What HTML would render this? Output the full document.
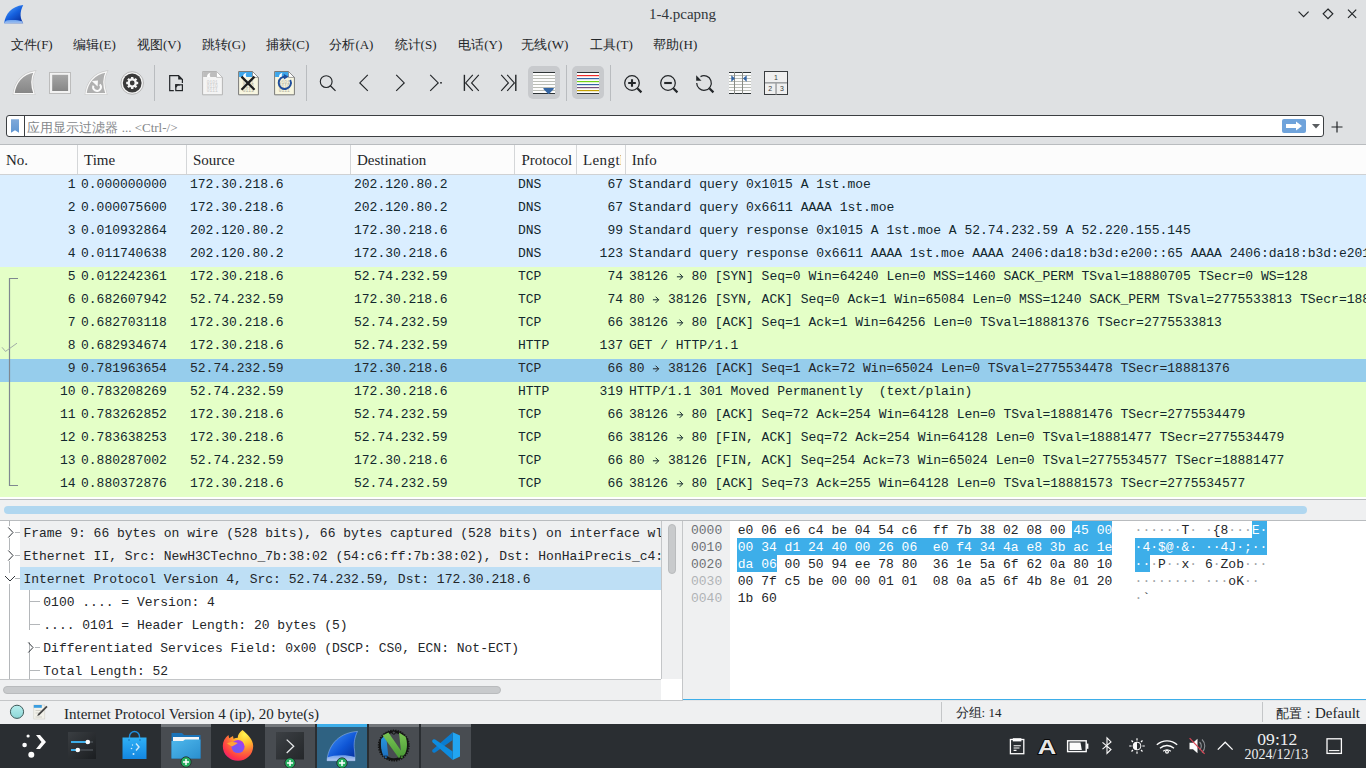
<!DOCTYPE html><html><head><meta charset="utf-8"><style>
*{margin:0;padding:0;box-sizing:border-box}
html,body{width:1366px;height:768px;overflow:hidden;background:#dfe1e3;font-family:"Liberation Serif", serif;color:#232629}
.a{position:absolute}
.t{position:absolute;white-space:pre;line-height:1}
.m{font-family:"Liberation Mono", monospace;font-size:13px}
svg{position:absolute;overflow:visible}
</style></head><body>
<svg style="left:0;top:0" width="30" height="30" viewBox="0 0 30 30">
<defs><linearGradient id="fin" x1="0.2" y1="0.1" x2="0.8" y2="0.9"><stop offset="0" stop-color="#4a98f8"/><stop offset="0.5" stop-color="#1560de"/><stop offset="1" stop-color="#0a36a6"/></linearGradient>
<linearGradient id="finw" x1="0" y1="0" x2="0" y2="1"><stop offset="0" stop-color="#6da2ee"/><stop offset="1" stop-color="#9fbfee"/></linearGradient></defs>
<path d="M4.2 23.2 C5.5 14 11 6.5 23.2 5 C21.4 8.5 20.4 12 20.6 15.5 C20.8 18.5 22 21 23.2 23.2 Z" fill="url(#fin)"/>
<path d="M4.2 23.2 C5 21.5 6 20.6 7.5 20.3 C12 19.6 18 19.8 22 21.2 L23.2 23.2 Z" fill="url(#finw)"/>
</svg>
<div class="t" style="left:649px;top:7px;font-size:15px;color:#31363b">1-4.pcapng</div>
<svg style="left:1297px;top:8px" width="64" height="14" viewBox="0 0 64 14">
<path d="M1.6 3.7 L6.6 8.7 L11.6 3.7" fill="none" stroke="#232629" stroke-width="1.2"/>
<path d="M31 1 L35.8 5.8 L31 10.6 L26.2 5.8 Z" fill="none" stroke="#232629" stroke-width="1.2"/>
<path d="M51 1.7 L59.2 9.9 M59.2 1.7 L51 9.9" fill="none" stroke="#232629" stroke-width="1.2"/>
</svg>
<div class="t" style="left:10.8px;top:38px;font-size:13px;color:#232629">文件(F)</div>
<div class="t" style="left:73.2px;top:38px;font-size:13px;color:#232629">编辑(E)</div>
<div class="t" style="left:137px;top:38px;font-size:13px;color:#232629">视图(V)</div>
<div class="t" style="left:201.5px;top:38px;font-size:13px;color:#232629">跳转(G)</div>
<div class="t" style="left:265.9px;top:38px;font-size:13px;color:#232629">捕获(C)</div>
<div class="t" style="left:329.4px;top:38px;font-size:13px;color:#232629">分析(A)</div>
<div class="t" style="left:394.6px;top:38px;font-size:13px;color:#232629">统计(S)</div>
<div class="t" style="left:458.2px;top:38px;font-size:13px;color:#232629">电话(Y)</div>
<div class="t" style="left:521.4px;top:38px;font-size:13px;color:#232629">无线(W)</div>
<div class="t" style="left:590.2px;top:38px;font-size:13px;color:#232629">工具(T)</div>
<div class="t" style="left:653.2px;top:38px;font-size:13px;color:#232629">帮助(H)</div>
<div id="toolbar"></div>
<div class="a" style="left:154.0px;top:65px;width:1px;height:36px;background:#b9bcbf"></div><div class="a" style="left:306.0px;top:65px;width:1px;height:36px;background:#b9bcbf"></div><div class="a" style="left:566.0px;top:65px;width:1px;height:36px;background:#b9bcbf"></div><div class="a" style="left:610.0px;top:65px;width:1px;height:36px;background:#b9bcbf"></div><div class="a" style="left:527.6px;top:66.4px;width:32.8px;height:32.8px;border-radius:5px;background:#c8cacd"></div><div class="a" style="left:571.5px;top:66.4px;width:32.8px;height:32.8px;border-radius:5px;background:#c8cacd"></div><svg style="left:12px;top:70px" width="25" height="26" viewBox="0 0 25 26">
<defs><linearGradient id="gfin" x1="0" y1="0" x2="0" y2="1"><stop offset="0" stop-color="#a8a8a8"/><stop offset="1" stop-color="#858585"/></linearGradient></defs>
<path d="M2 23.6 C3.3 13 10.3 3.5 22.4 1.8 C19.6 7 19 15 22 23.6 Z" fill="#f6f6f6" stroke="#c8c8c8" stroke-width="2.4"/>
<path d="M2 23.6 C3.3 13 10.3 3.5 22.4 1.8 C19.6 7 19 15 22 23.6 Z" fill="url(#gfin)" stroke="#f8f8f8" stroke-width="1.3"/>
</svg><svg style="left:48px;top:71px" width="24" height="24" viewBox="0 0 24 24">
<defs><linearGradient id="gsq" x1="0" y1="0" x2="0" y2="1"><stop offset="0" stop-color="#a6a6a6"/><stop offset="1" stop-color="#868686"/></linearGradient></defs>
<rect x="1.5" y="1.5" width="21" height="21" fill="#f2f2f2" stroke="#bcbcbc" stroke-width="1"/>
<rect x="4.2" y="3.8" width="15.9" height="16.2" fill="url(#gsq)"/>
</svg><svg style="left:84px;top:70px" width="25" height="26" viewBox="0 0 25 26">
<path d="M2 23.6 C3.3 13 10.3 3.5 22.4 1.8 C19.6 7 19 15 22 23.6 Z" fill="#f6f6f6" stroke="#c8c8c8" stroke-width="2.4"/>
<path d="M2 23.6 C3.3 13 10.3 3.5 22.4 1.8 C19.6 7 19 15 22 23.6 Z" fill="#b0b0b0" stroke="#f8f8f8" stroke-width="1.3"/>
<path d="M15.8 14.3 A3.9 3.9 0 1 1 9.4 15.6" fill="none" stroke="#fafafa" stroke-width="1.9"/>
<path d="M7.8 11.1 L14 10.5 L13.6 16.6 Z" fill="#fafafa"/>
</svg><svg style="left:120px;top:71px" width="25" height="25" viewBox="0 0 25 25">
<circle cx="12.2" cy="12" r="11.3" fill="#f4f4f4" stroke="#a8a8a8" stroke-width="0.8"/>
<circle cx="12.2" cy="12" r="9.4" fill="#3a3a3a"/>
<g fill="#f4f4f4" transform="translate(0 -0.2)"><circle cx="12.2" cy="12.2" r="4.7"/><rect x="11" y="6.2" width="2.4" height="12" transform="rotate(0 12.2 12.2)"/><rect x="11" y="6.2" width="2.4" height="12" transform="rotate(45 12.2 12.2)"/><rect x="11" y="6.2" width="2.4" height="12" transform="rotate(90 12.2 12.2)"/><rect x="11" y="6.2" width="2.4" height="12" transform="rotate(135 12.2 12.2)"/></g>
<circle cx="12.2" cy="12" r="2.4" fill="#3a3a3a"/>
</svg><svg style="left:164px;top:70px" width="26" height="26" viewBox="0 0 26 26">
<g fill="none" stroke="#232629" stroke-width="1.2">
<path d="M9.8 20.6 H5.7 V5.7 H14.6 L18.4 9.5 V12.9"/>
<rect x="11.8" y="14.8" width="6.6" height="5.8"/>
</g>
<path d="M14.2 5.4 V9.5 H18.4 Z" fill="#232629"/>
<path d="M11.3 14.2 H15 L16.2 15.4 H11.3 Z" fill="#232629"/>
<path d="M11.3 15.2 H14.2 L12.3 17.5 H11.3 Z" fill="#232629"/>
</svg><svg style="left:202px;top:70px" width="22" height="26" viewBox="0 0 22 26">
<path d="M0.6 1.5 H14.5 L20.4 7.4 V24.8 H0.6 Z" fill="#f4f4f4" stroke="#b4b4b4" stroke-width="1"/>
<path d="M1.1 2 H14.3 L19.4 7.1 V6.9 H1.1 Z" fill="#bdbdbd"/>
<path d="M5 6.9 C5 4.5 6.5 3 8.8 2.8 C7.6 3.8 7.4 5.5 8.4 6.9 Z" fill="#ffffff"/>
<path d="M14.5 1.5 V7.4 H20.4 Z" fill="#ffffff" stroke="#b4b4b4" stroke-width="0.7"/>
<g font-family="Liberation Mono" font-size="4.6" fill="#cacaca" text-anchor="middle"><text x="10.3" y="13.5">0101</text><text x="10.3" y="17.8">0110</text><text x="10.3" y="22.2">0111</text></g>
</svg><svg style="left:238px;top:70px" width="22" height="26" viewBox="0 0 22 26">
<path d="M0.6 1.5 H14.5 L20.4 7.4 V24.8 H0.6 Z" fill="#f8f6e0" stroke="#7a7a78" stroke-width="1"/>
<path d="M1.1 2 H14.3 L19.4 7.1 V6.9 H1.1 Z" fill="#3ea6ea"/>
<path d="M5 6.9 C5 4.5 6.5 3 8.8 2.8 C7.6 3.8 7.4 5.5 8.4 6.9 Z" fill="#ffffff"/>
<path d="M14.5 1.5 V7.4 H20.4 Z" fill="#ffffff" stroke="#7a7a78" stroke-width="0.7"/>
<g font-family="Liberation Mono" font-size="4.6" fill="#b0b0a0" text-anchor="middle"><text x="10.3" y="13.5">0101</text><text x="10.3" y="17.8">0110</text><text x="10.3" y="22.2">0111</text></g>
<path d="M3.5 6.6 L16.5 19.8 M16.5 6.6 L3.5 19.8" stroke="#1e1e1e" stroke-width="2.3"/></svg><svg style="left:274px;top:70px" width="22" height="26" viewBox="0 0 22 26">
<path d="M0.6 1.5 H14.5 L20.4 7.4 V24.8 H0.6 Z" fill="#f8f6e0" stroke="#7a7a78" stroke-width="1"/>
<path d="M1.1 2 H14.3 L19.4 7.1 V6.9 H1.1 Z" fill="#3ea6ea"/>
<path d="M5 6.9 C5 4.5 6.5 3 8.8 2.8 C7.6 3.8 7.4 5.5 8.4 6.9 Z" fill="#ffffff"/>
<path d="M14.5 1.5 V7.4 H20.4 Z" fill="#ffffff" stroke="#7a7a78" stroke-width="0.7"/>
<g font-family="Liberation Mono" font-size="4.6" fill="#b0b0a0" text-anchor="middle"><text x="10.3" y="13.5">0101</text><text x="10.3" y="17.8">0110</text><text x="10.3" y="22.2">0111</text></g>
<path d="M12.2 6.9 A6.1 6.1 0 1 0 16.2 10" fill="none" stroke="#1f4e9c" stroke-width="1.9"/><path d="M9.8 4 L14.6 6.8 L9.8 9.6 Z" fill="#1f4e9c"/></svg><svg style="left:310px;top:68px" width="210" height="30" viewBox="0 0 210 30">
<g fill="none" stroke="#232629" stroke-width="1.15">
<circle cx="16.2" cy="13.6" r="5.9"/><path d="M20.4 17.8 L25.5 22.9" stroke-width="1.25"/>
<path d="M57.8 6.9 L49.8 14.9 L57.8 22.9"/>
<path d="M86.2 6.9 L94.2 14.9 L86.2 22.9"/>
<path d="M120.2 6.9 L128.2 14.9 L120.2 22.9"/>
<path d="M154.4 6.8 V22.9" stroke-width="1.4"/><path d="M162.8 6.9 L155.6 14.9 L162.8 22.9 M168.8 6.9 L161.6 14.9 L168.8 22.9"/>
<path d="M205.8 6.8 V22.9" stroke-width="1.4"/><path d="M191.2 6.9 L198.4 14.9 L191.2 22.9 M197.2 6.9 L204.4 14.9 L197.2 22.9"/>
</g><rect x="130.2" y="14" width="1.6" height="1.6" fill="#232629"/>
</svg><svg style="left:533px;top:72px" width="22" height="22" viewBox="0 0 22 22"><rect x="0" y="0" width="22" height="22" fill="#fcfcfc"/><rect x="0" y="0" width="22" height="1" fill="#2e3436"/><rect x="0" y="21" width="22" height="1" fill="#2e3436"/><rect x="0" y="3" width="22" height="1" fill="#babdb6"/><rect x="0" y="6" width="22" height="1" fill="#babdb6"/><rect x="0" y="9" width="22" height="1" fill="#babdb6"/><rect x="0" y="12" width="22" height="1" fill="#babdb6"/><rect x="0" y="15" width="22" height="1" fill="#babdb6"/><rect x="0" y="18" width="22" height="1" fill="#babdb6"/><path d="M10.2 16.8 Q10.2 16 11.2 16 H20 Q21 16 21 16.8 L16.2 21.8 Q15.6 22.3 15 21.8 Z" fill="#3465a4"/></svg><svg style="left:577px;top:72px" width="22" height="22" viewBox="0 0 22 22"><rect x="0" y="0" width="22" height="22" fill="#fcfcfc"/><rect x="0" y="0" width="22" height="1" fill="#2e3436"/><rect x="0" y="21" width="22" height="1" fill="#2e3436"/><rect x="0" y="3" width="22" height="1.2" fill="#ef2929"/><rect x="0" y="6" width="22" height="1.2" fill="#3465a4"/><rect x="0" y="9" width="22" height="1.2" fill="#73d216"/><rect x="0" y="12" width="22" height="1.2" fill="#3465a4"/><rect x="0" y="15" width="22" height="1.2" fill="#75507b"/><rect x="0" y="18" width="22" height="1.2" fill="#c4a000"/></svg><svg style="left:618px;top:68px" width="30" height="30" viewBox="0 0 30 30"><circle cx="14" cy="15" r="7.3" fill="none" stroke="#232629" stroke-width="1.25"/><path d="M19.3 20.3 L23.4 24.4" stroke="#232629" stroke-width="2.2"/><path d="M10.2 15 H17.8 M14 11.2 V18.8" stroke="#232629" stroke-width="2.1"/></svg><svg style="left:654px;top:68px" width="30" height="30" viewBox="0 0 30 30"><circle cx="14" cy="15" r="7.3" fill="none" stroke="#232629" stroke-width="1.25"/><path d="M19.3 20.3 L23.4 24.4" stroke="#232629" stroke-width="2.2"/><path d="M10.2 15 H17.8" stroke="#232629" stroke-width="2.1"/></svg><svg style="left:690px;top:68px" width="30" height="30" viewBox="0 0 30 30"><path d="M6.7 15 A7.3 7.3 0 1 0 10.5 8.6" fill="none" stroke="#232629" stroke-width="1.25"/><path d="M6.2 7.3 L6.2 12.8 L11.5 12.8 Z" fill="#232629"/><path d="M19.3 20.3 L23.4 24.4" stroke="#232629" stroke-width="2.2"/></svg><svg style="left:729px;top:72px" width="22" height="22" viewBox="0 0 22 22"><rect x="0" y="0" width="22" height="22" fill="#fcfcfc"/><rect x="0" y="0" width="22" height="1" fill="#2e3436"/><rect x="0" y="21" width="22" height="1" fill="#2e3436"/><rect x="0" y="3" width="22" height="1" fill="#babdb6"/><rect x="0" y="6" width="22" height="1" fill="#babdb6"/><rect x="0" y="9" width="22" height="1" fill="#babdb6"/><rect x="0" y="12" width="22" height="1" fill="#babdb6"/><rect x="0" y="15" width="22" height="1" fill="#babdb6"/><rect x="0" y="18" width="22" height="1" fill="#babdb6"/><rect x="5" y="0" width="1" height="22" fill="#888a85"/><rect x="13" y="0" width="1" height="22" fill="#888a85"/><path d="M2.3 3.2 L6 6.5 L2.3 9.8 Z" fill="#3465a4"/><path d="M17.7 3.2 L14 6.5 L17.7 9.8 Z" fill="#3465a4"/></svg><svg style="left:764px;top:71px" width="24" height="24" viewBox="0 0 24 24">
<rect x="0.5" y="0.5" width="23" height="23" fill="#efefef" stroke="#3a3d40" stroke-width="1"/>
<rect x="1" y="11" width="22" height="1.6" fill="#a0a2a4"/><rect x="11.3" y="12" width="1.5" height="11.5" fill="#a0a2a4"/>
<text x="12" y="8.8" font-family="Liberation Sans" font-size="7" fill="#3a3d40" text-anchor="middle">1</text>
<text x="6.3" y="20" font-family="Liberation Sans" font-size="7" fill="#3a3d40" text-anchor="middle">2</text>
<text x="18" y="20" font-family="Liberation Sans" font-size="7" fill="#3a3d40" text-anchor="middle">3</text>
</svg>
<div class="a" style="left:6px;top:115px;width:1318px;height:22px;background:#fff;border:1px solid #3c3f42;border-radius:3px"></div>
<div class="a" style="left:24px;top:116px;width:1px;height:20px;background:#3c3f42"></div>
<svg style="left:11px;top:119px" width="9" height="14" viewBox="0 0 9 14"><defs><linearGradient id="bmk" x1="0" y1="0" x2="0" y2="1"><stop offset="0" stop-color="#7fa9da"/><stop offset="1" stop-color="#6096d2"/></linearGradient></defs><path d="M0 0.2 H8 V13.8 L4 11.2 L0 13.8 Z" fill="url(#bmk)"/></svg>
<div class="t" style="left:27.4px;top:121px;font-size:13px;color:#85888b">应用显示过滤器 ... &lt;Ctrl-/&gt;</div>
<div class="a" style="left:1282px;top:119px;width:24px;height:14px;background:#6fa3db;border-radius:2px"></div>
<svg style="left:1284px;top:120px" width="20" height="12" viewBox="0 0 20 12"><path d="M2 4 H12 V1.5 L18 6 L12 10.5 V8 H2 Z" fill="#fff"/></svg>
<svg style="left:1312px;top:124px" width="8" height="5" viewBox="0 0 8 5"><path d="M0 0 H8 L4 4.5 Z" fill="#5a5d60"/></svg>
<svg style="left:1331px;top:121px" width="12" height="12" viewBox="0 0 12 12"><path d="M6 0.5 V11.5 M0.5 6 H11.5" stroke="#232629" stroke-width="1.2"/></svg>
<div class="a" style="left:0;top:144px;width:1366px;height:1px;background:#b9bcbf"></div>
<div class="a" style="left:0;top:145px;width:1366px;height:30px;background:#fcfcfc"></div>
<div class="a" style="left:0;top:174px;width:1366px;height:1px;background:#cfd1d3"></div>
<div class="a" style="left:77.0px;top:145px;width:1px;height:29px;background:#d4d6d8"></div>
<div class="a" style="left:186.0px;top:145px;width:1px;height:29px;background:#d4d6d8"></div>
<div class="a" style="left:350.0px;top:145px;width:1px;height:29px;background:#d4d6d8"></div>
<div class="a" style="left:514.0px;top:145px;width:1px;height:29px;background:#d4d6d8"></div>
<div class="a" style="left:576.0px;top:145px;width:1px;height:29px;background:#d4d6d8"></div>
<div class="a" style="left:625.0px;top:145px;width:1px;height:29px;background:#d4d6d8"></div>
<div class="a" style="left:577px;top:145px;width:44.2px;height:29px;overflow:hidden"><div class="t" style="left:6px;top:8px;font-size:15px;letter-spacing:0.4px">Length</div></div>
<div class="a" style="left:515px;top:145px;width:61px;height:29px;overflow:hidden"><div class="t" style="left:6.4px;top:8px;font-size:15px">Protocol</div></div>
<div class="t" style="left:6px;top:153px;font-size:15px">No.</div>
<div class="t" style="left:84px;top:153px;font-size:15px">Time</div>
<div class="t" style="left:193px;top:153px;font-size:15px">Source</div>
<div class="t" style="left:357px;top:153px;font-size:15px">Destination</div>
<div class="t" style="left:631.8px;top:153px;font-size:15px">Info</div>
<div class="a" style="left:0;top:175px;width:1366px;height:23px;background:#daeeff"></div>
<div class="t m" style="left:0;top:178px;color:#12272e;width:75.5px;text-align:right">1</div>
<div class="t m" style="left:81px;top:178px;color:#12272e">0.000000000</div>
<div class="t m" style="left:190px;top:178px;color:#12272e">172.30.218.6</div>
<div class="t m" style="left:354px;top:178px;color:#12272e">202.120.80.2</div>
<div class="t m" style="left:518px;top:178px;color:#12272e">DNS</div>
<div class="t m" style="left:578px;top:178px;color:#12272e;width:45px;text-align:right">67</div>
<div class="t m" style="left:629px;top:178px;color:#12272e">Standard query 0x1015 A 1st.moe</div>
<div class="a" style="left:0;top:198px;width:1366px;height:23px;background:#daeeff"></div>
<div class="t m" style="left:0;top:201px;color:#12272e;width:75.5px;text-align:right">2</div>
<div class="t m" style="left:81px;top:201px;color:#12272e">0.000075600</div>
<div class="t m" style="left:190px;top:201px;color:#12272e">172.30.218.6</div>
<div class="t m" style="left:354px;top:201px;color:#12272e">202.120.80.2</div>
<div class="t m" style="left:518px;top:201px;color:#12272e">DNS</div>
<div class="t m" style="left:578px;top:201px;color:#12272e;width:45px;text-align:right">67</div>
<div class="t m" style="left:629px;top:201px;color:#12272e">Standard query 0x6611 AAAA 1st.moe</div>
<div class="a" style="left:0;top:221px;width:1366px;height:23px;background:#daeeff"></div>
<div class="t m" style="left:0;top:224px;color:#12272e;width:75.5px;text-align:right">3</div>
<div class="t m" style="left:81px;top:224px;color:#12272e">0.010932864</div>
<div class="t m" style="left:190px;top:224px;color:#12272e">202.120.80.2</div>
<div class="t m" style="left:354px;top:224px;color:#12272e">172.30.218.6</div>
<div class="t m" style="left:518px;top:224px;color:#12272e">DNS</div>
<div class="t m" style="left:578px;top:224px;color:#12272e;width:45px;text-align:right">99</div>
<div class="t m" style="left:629px;top:224px;color:#12272e">Standard query response 0x1015 A 1st.moe A 52.74.232.59 A 52.220.155.145</div>
<div class="a" style="left:0;top:244px;width:1366px;height:23px;background:#daeeff"></div>
<div class="t m" style="left:0;top:247px;color:#12272e;width:75.5px;text-align:right">4</div>
<div class="t m" style="left:81px;top:247px;color:#12272e">0.011740638</div>
<div class="t m" style="left:190px;top:247px;color:#12272e">202.120.80.2</div>
<div class="t m" style="left:354px;top:247px;color:#12272e">172.30.218.6</div>
<div class="t m" style="left:518px;top:247px;color:#12272e">DNS</div>
<div class="t m" style="left:578px;top:247px;color:#12272e;width:45px;text-align:right">123</div>
<div class="t m" style="left:629px;top:247px;color:#12272e">Standard query response 0x6611 AAAA 1st.moe AAAA 2406:da18:b3d:e200::65 AAAA 2406:da18:b3d:e201::66</div>
<div class="a" style="left:0;top:267px;width:1366px;height:23px;background:#e4ffc7"></div>
<div class="t m" style="left:0;top:270px;color:#12272e;width:75.5px;text-align:right">5</div>
<div class="t m" style="left:81px;top:270px;color:#12272e">0.012242361</div>
<div class="t m" style="left:190px;top:270px;color:#12272e">172.30.218.6</div>
<div class="t m" style="left:354px;top:270px;color:#12272e">52.74.232.59</div>
<div class="t m" style="left:518px;top:270px;color:#12272e">TCP</div>
<div class="t m" style="left:578px;top:270px;color:#12272e;width:45px;text-align:right">74</div>
<div class="t m" style="left:629px;top:270px;color:#12272e">38126 <span style="display:inline-block;width:7.8px;height:13px;vertical-align:top;position:relative"><svg style="left:0;top:0" width="8" height="13" viewBox="0 0 8 13"><path d="M0.9 6.8 H6.6 M3.6 3.7 L6.7 6.8 L3.6 9.9" fill="none" stroke="#12272e" stroke-width="1"/></svg></span> 80 [SYN] Seq=0 Win=64240 Len=0 MSS=1460 SACK_PERM TSval=18880705 TSecr=0 WS=128</div>
<div class="a" style="left:0;top:290px;width:1366px;height:23px;background:#e4ffc7"></div>
<div class="t m" style="left:0;top:293px;color:#12272e;width:75.5px;text-align:right">6</div>
<div class="t m" style="left:81px;top:293px;color:#12272e">0.682607942</div>
<div class="t m" style="left:190px;top:293px;color:#12272e">52.74.232.59</div>
<div class="t m" style="left:354px;top:293px;color:#12272e">172.30.218.6</div>
<div class="t m" style="left:518px;top:293px;color:#12272e">TCP</div>
<div class="t m" style="left:578px;top:293px;color:#12272e;width:45px;text-align:right">74</div>
<div class="t m" style="left:629px;top:293px;color:#12272e">80 <span style="display:inline-block;width:7.8px;height:13px;vertical-align:top;position:relative"><svg style="left:0;top:0" width="8" height="13" viewBox="0 0 8 13"><path d="M0.9 6.8 H6.6 M3.6 3.7 L6.7 6.8 L3.6 9.9" fill="none" stroke="#12272e" stroke-width="1"/></svg></span> 38126 [SYN, ACK] Seq=0 Ack=1 Win=65084 Len=0 MSS=1240 SACK_PERM TSval=2775533813 TSecr=18880705</div>
<div class="a" style="left:0;top:313px;width:1366px;height:23px;background:#e4ffc7"></div>
<div class="t m" style="left:0;top:316px;color:#12272e;width:75.5px;text-align:right">7</div>
<div class="t m" style="left:81px;top:316px;color:#12272e">0.682703118</div>
<div class="t m" style="left:190px;top:316px;color:#12272e">172.30.218.6</div>
<div class="t m" style="left:354px;top:316px;color:#12272e">52.74.232.59</div>
<div class="t m" style="left:518px;top:316px;color:#12272e">TCP</div>
<div class="t m" style="left:578px;top:316px;color:#12272e;width:45px;text-align:right">66</div>
<div class="t m" style="left:629px;top:316px;color:#12272e">38126 <span style="display:inline-block;width:7.8px;height:13px;vertical-align:top;position:relative"><svg style="left:0;top:0" width="8" height="13" viewBox="0 0 8 13"><path d="M0.9 6.8 H6.6 M3.6 3.7 L6.7 6.8 L3.6 9.9" fill="none" stroke="#12272e" stroke-width="1"/></svg></span> 80 [ACK] Seq=1 Ack=1 Win=64256 Len=0 TSval=18881376 TSecr=2775533813</div>
<div class="a" style="left:0;top:336px;width:1366px;height:23px;background:#e4ffc7"></div>
<div class="t m" style="left:0;top:339px;color:#12272e;width:75.5px;text-align:right">8</div>
<div class="t m" style="left:81px;top:339px;color:#12272e">0.682934674</div>
<div class="t m" style="left:190px;top:339px;color:#12272e">172.30.218.6</div>
<div class="t m" style="left:354px;top:339px;color:#12272e">52.74.232.59</div>
<div class="t m" style="left:518px;top:339px;color:#12272e">HTTP</div>
<div class="t m" style="left:578px;top:339px;color:#12272e;width:45px;text-align:right">137</div>
<div class="t m" style="left:629px;top:339px;color:#12272e">GET / HTTP/1.1 </div>
<div class="a" style="left:0;top:359px;width:1366px;height:23px;background:#96cdec"></div>
<div class="t m" style="left:0;top:362px;color:#232629;width:75.5px;text-align:right">9</div>
<div class="t m" style="left:81px;top:362px;color:#232629">0.781963654</div>
<div class="t m" style="left:190px;top:362px;color:#232629">52.74.232.59</div>
<div class="t m" style="left:354px;top:362px;color:#232629">172.30.218.6</div>
<div class="t m" style="left:518px;top:362px;color:#232629">TCP</div>
<div class="t m" style="left:578px;top:362px;color:#232629;width:45px;text-align:right">66</div>
<div class="t m" style="left:629px;top:362px;color:#232629">80 <span style="display:inline-block;width:7.8px;height:13px;vertical-align:top;position:relative"><svg style="left:0;top:0" width="8" height="13" viewBox="0 0 8 13"><path d="M0.9 6.8 H6.6 M3.6 3.7 L6.7 6.8 L3.6 9.9" fill="none" stroke="#232629" stroke-width="1"/></svg></span> 38126 [ACK] Seq=1 Ack=72 Win=65024 Len=0 TSval=2775534478 TSecr=18881376</div>
<div class="a" style="left:0;top:382px;width:1366px;height:23px;background:#e4ffc7"></div>
<div class="t m" style="left:0;top:385px;color:#12272e;width:75.5px;text-align:right">10</div>
<div class="t m" style="left:81px;top:385px;color:#12272e">0.783208269</div>
<div class="t m" style="left:190px;top:385px;color:#12272e">52.74.232.59</div>
<div class="t m" style="left:354px;top:385px;color:#12272e">172.30.218.6</div>
<div class="t m" style="left:518px;top:385px;color:#12272e">HTTP</div>
<div class="t m" style="left:578px;top:385px;color:#12272e;width:45px;text-align:right">319</div>
<div class="t m" style="left:629px;top:385px;color:#12272e">HTTP/1.1 301 Moved Permanently  (text/plain)</div>
<div class="a" style="left:0;top:405px;width:1366px;height:23px;background:#e4ffc7"></div>
<div class="t m" style="left:0;top:408px;color:#12272e;width:75.5px;text-align:right">11</div>
<div class="t m" style="left:81px;top:408px;color:#12272e">0.783262852</div>
<div class="t m" style="left:190px;top:408px;color:#12272e">172.30.218.6</div>
<div class="t m" style="left:354px;top:408px;color:#12272e">52.74.232.59</div>
<div class="t m" style="left:518px;top:408px;color:#12272e">TCP</div>
<div class="t m" style="left:578px;top:408px;color:#12272e;width:45px;text-align:right">66</div>
<div class="t m" style="left:629px;top:408px;color:#12272e">38126 <span style="display:inline-block;width:7.8px;height:13px;vertical-align:top;position:relative"><svg style="left:0;top:0" width="8" height="13" viewBox="0 0 8 13"><path d="M0.9 6.8 H6.6 M3.6 3.7 L6.7 6.8 L3.6 9.9" fill="none" stroke="#12272e" stroke-width="1"/></svg></span> 80 [ACK] Seq=72 Ack=254 Win=64128 Len=0 TSval=18881476 TSecr=2775534479</div>
<div class="a" style="left:0;top:428px;width:1366px;height:23px;background:#e4ffc7"></div>
<div class="t m" style="left:0;top:431px;color:#12272e;width:75.5px;text-align:right">12</div>
<div class="t m" style="left:81px;top:431px;color:#12272e">0.783638253</div>
<div class="t m" style="left:190px;top:431px;color:#12272e">172.30.218.6</div>
<div class="t m" style="left:354px;top:431px;color:#12272e">52.74.232.59</div>
<div class="t m" style="left:518px;top:431px;color:#12272e">TCP</div>
<div class="t m" style="left:578px;top:431px;color:#12272e;width:45px;text-align:right">66</div>
<div class="t m" style="left:629px;top:431px;color:#12272e">38126 <span style="display:inline-block;width:7.8px;height:13px;vertical-align:top;position:relative"><svg style="left:0;top:0" width="8" height="13" viewBox="0 0 8 13"><path d="M0.9 6.8 H6.6 M3.6 3.7 L6.7 6.8 L3.6 9.9" fill="none" stroke="#12272e" stroke-width="1"/></svg></span> 80 [FIN, ACK] Seq=72 Ack=254 Win=64128 Len=0 TSval=18881477 TSecr=2775534479</div>
<div class="a" style="left:0;top:451px;width:1366px;height:23px;background:#e4ffc7"></div>
<div class="t m" style="left:0;top:454px;color:#12272e;width:75.5px;text-align:right">13</div>
<div class="t m" style="left:81px;top:454px;color:#12272e">0.880287002</div>
<div class="t m" style="left:190px;top:454px;color:#12272e">52.74.232.59</div>
<div class="t m" style="left:354px;top:454px;color:#12272e">172.30.218.6</div>
<div class="t m" style="left:518px;top:454px;color:#12272e">TCP</div>
<div class="t m" style="left:578px;top:454px;color:#12272e;width:45px;text-align:right">66</div>
<div class="t m" style="left:629px;top:454px;color:#12272e">80 <span style="display:inline-block;width:7.8px;height:13px;vertical-align:top;position:relative"><svg style="left:0;top:0" width="8" height="13" viewBox="0 0 8 13"><path d="M0.9 6.8 H6.6 M3.6 3.7 L6.7 6.8 L3.6 9.9" fill="none" stroke="#12272e" stroke-width="1"/></svg></span> 38126 [FIN, ACK] Seq=254 Ack=73 Win=65024 Len=0 TSval=2775534577 TSecr=18881477</div>
<div class="a" style="left:0;top:474px;width:1366px;height:23px;background:#e4ffc7"></div>
<div class="t m" style="left:0;top:477px;color:#12272e;width:75.5px;text-align:right">14</div>
<div class="t m" style="left:81px;top:477px;color:#12272e">0.880372876</div>
<div class="t m" style="left:190px;top:477px;color:#12272e">172.30.218.6</div>
<div class="t m" style="left:354px;top:477px;color:#12272e">52.74.232.59</div>
<div class="t m" style="left:518px;top:477px;color:#12272e">TCP</div>
<div class="t m" style="left:578px;top:477px;color:#12272e;width:45px;text-align:right">66</div>
<div class="t m" style="left:629px;top:477px;color:#12272e">38126 <span style="display:inline-block;width:7.8px;height:13px;vertical-align:top;position:relative"><svg style="left:0;top:0" width="8" height="13" viewBox="0 0 8 13"><path d="M0.9 6.8 H6.6 M3.6 3.7 L6.7 6.8 L3.6 9.9" fill="none" stroke="#12272e" stroke-width="1"/></svg></span> 80 [ACK] Seq=73 Ack=255 Win=64128 Len=0 TSval=18881573 TSecr=2775534577</div>
<svg style="left:0;top:267px" width="24" height="230" viewBox="0 0 24 230"><path d="M18 11.5 H9.5 V218.5 H18" fill="none" stroke="#7f8890" stroke-width="1.2"/><path d="M2 80.3 L5.5 84.4 L17 76.2" fill="none" stroke="#8f979e" stroke-width="0.8"/></svg>
<div class="a" style="left:0;top:497px;width:1366px;height:2px;background:#ffffff"></div>
<div class="a" style="left:0;top:499px;width:1366px;height:1px;background:#b9bcbf"></div>
<div class="a" style="left:0;top:500px;width:1366px;height:20px;background:#eff0f1"></div>
<div class="a" style="left:3.5px;top:506px;width:1303px;height:8px;border-radius:4px;background:#b0d7f0"></div>
<div class="a" style="left:0;top:520px;width:1366px;height:1px;background:#b9bcbf"></div>
<div class="a" style="left:0;top:521px;width:661px;height:158px;background:#ffffff;overflow:hidden" id="tree">
<div class="a" style="left:20px;top:0px;width:642px;height:23px;background:#eff0f1"></div>
<div class="t m" style="left:23.4px;top:5.8px">Frame 9: 66 bytes on wire (528 bits), 66 bytes captured (528 bits) on interface wlp2s0, id 0</div>
<div class="a" style="left:20px;top:23px;width:642px;height:23px;background:#eff0f1"></div>
<div class="t m" style="left:23.4px;top:28.8px">Ethernet II, Src: NewH3CTechno_7b:38:02 (54:c6:ff:7b:38:02), Dst: HonHaiPrecis_c4:be:04 (e0:06:e6:c4:be:04)</div>
<div class="a" style="left:20px;top:46px;width:642px;height:23px;background:#bedff5"></div>
<div class="t m" style="left:23.4px;top:51.8px">Internet Protocol Version 4, Src: 52.74.232.59, Dst: 172.30.218.6</div>
<div class="t m" style="left:43.3px;top:74.8px">0100 .... = Version: 4</div>
<div class="t m" style="left:43.3px;top:97.8px">.... 0101 = Header Length: 20 bytes (5)</div>
<div class="t m" style="left:43.3px;top:120.8px">Differentiated Services Field: 0x00 (DSCP: CS0, ECN: Not-ECT)</div>
<div class="t m" style="left:43.3px;top:143.8px">Total Length: 52</div>
<svg style="left:0;top:0" width="662" height="159" viewBox="0 0 662 159"><path d="M9.5 0 V5" stroke="#b4b7ba" stroke-width="1"/><path d="M9.5 17 V29" stroke="#b4b7ba" stroke-width="1"/><path d="M9.5 40 V52" stroke="#b4b7ba" stroke-width="1"/><path d="M9.5 63 V159" stroke="#b4b7ba" stroke-width="1"/><path d="M29.5 69 V109" stroke="#b4b7ba" stroke-width="1"/><path d="M29.5 121 V159" stroke="#b4b7ba" stroke-width="1"/><path d="M15 11.5 H20" stroke="#b4b7ba" stroke-width="1"/><path d="M15 34.5 H20" stroke="#b4b7ba" stroke-width="1"/><path d="M15 57.5 H20" stroke="#b4b7ba" stroke-width="1"/><path d="M8.3 6.5 L13 11.5 L8.3 16.5" fill="none" stroke="#31363b" stroke-width="1"/><path d="M8.3 29.5 L13 34.5 L8.3 39.5" fill="none" stroke="#31363b" stroke-width="1"/><path d="M5 55 L10 60 L15 55" fill="none" stroke="#31363b" stroke-width="1"/><path d="M30 80.5 H40" stroke="#b4b7ba" stroke-width="1"/><path d="M30 103.5 H40" stroke="#b4b7ba" stroke-width="1"/><path d="M30 149.5 H40" stroke="#b4b7ba" stroke-width="1"/><path d="M28.3 121.5 L33 126.5 L28.3 131.5" fill="none" stroke="#31363b" stroke-width="1"/><path d="M35 126.5 H40" stroke="#b4b7ba" stroke-width="1"/></svg>
</div>
<div class="a" style="left:661px;top:521px;width:21px;height:158px;background:#eff0f1;border-left:1px solid #c4c6c8"></div>
<div class="a" style="left:668px;top:524px;width:8px;height:50px;border-radius:4px;background:#c8cacc;border:1px solid #b9bbbd"></div>
<div class="a" style="left:0;top:679px;width:661px;height:21px;background:#eff0f1;border-top:1px solid #c4c6c8"></div>
<div class="a" style="left:3px;top:686px;width:498px;height:8px;border-radius:4px;background:#c8cacc;border:1px solid #b9bbbd"></div>
<div class="a" style="left:661px;top:679px;width:21px;height:21px;background:#ffffff"></div>
<div class="a" style="left:0;top:700px;width:683px;height:1px;background:#c4c6c8"></div>
<div class="a" style="left:682px;top:521px;width:684px;height:179px;background:#ffffff;border-left:1px solid #c4c6c8"></div>
<div class="a" style="left:683px;top:521px;width:47px;height:178px;background:#eff0f1"></div>
<div class="a" style="left:683px;top:699px;width:683px;height:1px;background:#3daee9"></div>
<div class="a" style="left:1072.1999999999998px;top:521px;width:40.0px;height:17px;background:#3daee9"></div>
<div class="a" style="left:736.8px;top:538px;width:375.4px;height:17px;background:#3daee9"></div>
<div class="a" style="left:736.8px;top:555px;width:40.0px;height:17px;background:#3daee9"></div>
<div class="a" style="left:1251.6px;top:521px;width:15.6px;height:17px;background:#3daee9"></div>
<div class="a" style="left:1134.6px;top:538px;width:132.6px;height:17px;background:#3daee9"></div>
<div class="a" style="left:1134.6px;top:555px;width:15.6px;height:17px;background:#3daee9"></div>
<div class="t m" style="left:691px;top:524px;color:#6e7175">0000</div>
<div class="t m" style="left:737.8px;top:524px"><span style="color:#232629">e0 06 e6 c4 be 04 54 c6  ff 7b 38 02 08 00</span><span style="color:#fff"> 45 00</span></div>
<div class="t m" style="left:1134.6px;top:524px"><span style="color:#a0a3a6">·</span><span style="color:#a0a3a6">·</span><span style="color:#a0a3a6">·</span><span style="color:#a0a3a6">·</span><span style="color:#a0a3a6">·</span><span style="color:#a0a3a6">·</span><span style="color:#232629">T</span><span style="color:#a0a3a6">·</span><span style="color:#232629"> </span><span style="color:#a0a3a6">·</span><span style="color:#232629">{</span><span style="color:#232629">8</span><span style="color:#a0a3a6">·</span><span style="color:#a0a3a6">·</span><span style="color:#a0a3a6">·</span><span style="color:#fff">E</span><span style="color:#fff">·</span></div>
<div class="t m" style="left:691px;top:541px;color:#6e7175">0010</div>
<div class="t m" style="left:737.8px;top:541px"><span style="color:#fff">00 34 d1 24 40 00 26 06  e0 f4 34 4a e8 3b ac 1e</span></div>
<div class="t m" style="left:1134.6px;top:541px"><span style="color:#fff">·</span><span style="color:#fff">4</span><span style="color:#fff">·</span><span style="color:#fff">$</span><span style="color:#fff">@</span><span style="color:#fff">·</span><span style="color:#fff">&amp;</span><span style="color:#fff">·</span><span style="color:#fff"> </span><span style="color:#fff">·</span><span style="color:#fff">·</span><span style="color:#fff">4</span><span style="color:#fff">J</span><span style="color:#fff">·</span><span style="color:#fff">;</span><span style="color:#fff">·</span><span style="color:#fff">·</span></div>
<div class="t m" style="left:691px;top:558px;color:#6e7175">0020</div>
<div class="t m" style="left:737.8px;top:558px"><span style="color:#fff">da 06</span><span style="color:#232629"> 00 50 94 ee 78 80  36 1e 5a 6f 62 0a 80 10</span></div>
<div class="t m" style="left:1134.6px;top:558px"><span style="color:#fff">·</span><span style="color:#fff">·</span><span style="color:#a0a3a6">·</span><span style="color:#232629">P</span><span style="color:#a0a3a6">·</span><span style="color:#a0a3a6">·</span><span style="color:#232629">x</span><span style="color:#a0a3a6">·</span><span style="color:#232629"> </span><span style="color:#232629">6</span><span style="color:#a0a3a6">·</span><span style="color:#232629">Z</span><span style="color:#232629">o</span><span style="color:#232629">b</span><span style="color:#a0a3a6">·</span><span style="color:#a0a3a6">·</span><span style="color:#a0a3a6">·</span></div>
<div class="t m" style="left:691px;top:575px;color:#b0b3b6">0030</div>
<div class="t m" style="left:737.8px;top:575px"><span style="color:#232629">00 7f c5 be 00 00 01 01  08 0a a5 6f 4b 8e 01 20</span></div>
<div class="t m" style="left:1134.6px;top:575px"><span style="color:#a0a3a6">·</span><span style="color:#a0a3a6">·</span><span style="color:#a0a3a6">·</span><span style="color:#a0a3a6">·</span><span style="color:#a0a3a6">·</span><span style="color:#a0a3a6">·</span><span style="color:#a0a3a6">·</span><span style="color:#a0a3a6">·</span><span style="color:#232629"> </span><span style="color:#a0a3a6">·</span><span style="color:#a0a3a6">·</span><span style="color:#a0a3a6">·</span><span style="color:#232629">o</span><span style="color:#232629">K</span><span style="color:#a0a3a6">·</span><span style="color:#a0a3a6">·</span><span style="color:#232629"> </span></div>
<div class="t m" style="left:691px;top:592px;color:#b0b3b6">0040</div>
<div class="t m" style="left:737.8px;top:592px"><span style="color:#232629">1b 60</span></div>
<div class="t m" style="left:1134.6px;top:592px"><span style="color:#a0a3a6">·</span><span style="color:#232629">`</span></div>
<div class="a" style="left:0;top:700px;width:1366px;height:24px;background:#eff0f1"></div>
<div class="a" style="left:0;top:700px;width:683px;height:1px;background:#c4c6c8"></div>
<div class="a" style="left:683px;top:700px;width:683px;height:1px;background:#e4e5e7"></div>
<svg style="left:9px;top:704px" width="16" height="16" viewBox="0 0 16 16"><defs><linearGradient id="stc" x1="0" y1="0" x2="0" y2="1"><stop offset="0" stop-color="#b8eeee"/><stop offset="1" stop-color="#8cd6d6"/></linearGradient></defs><circle cx="8" cy="7.8" r="6.6" fill="url(#stc)" stroke="#3f5a5a" stroke-width="1"/></svg>
<svg style="left:33px;top:704px" width="16" height="16" viewBox="0 0 16 16">
<rect x="0.8" y="1" width="11" height="14" fill="#f2f1ea" stroke="#d0d0c8" stroke-width="0.6"/>
<rect x="0.8" y="1" width="8" height="2.8" fill="#3a9de0"/>
<path d="M2.5 6.5 H8 M2.5 9 H7 M2.5 13 H9" stroke="#c8c8c0" stroke-width="0.8"/>
<path d="M13.3 1.8 L14.6 3.1 L6.3 11.3 L4.2 12 L5 9.9 Z" fill="#454545"/>
</svg>
<div class="t" style="left:64px;top:706.8px;font-size:15px;color:#232629">Internet Protocol Version 4 (ip), 20 byte(s)</div>
<div class="a" style="left:941px;top:702px;width:1px;height:20px;background:#c4c6c8"></div>
<div class="t" style="left:955.6px;top:706px;font-size:13px;color:#232629">分组: 14</div>
<div class="a" style="left:1262px;top:702px;width:1px;height:20px;background:#c4c6c8"></div>
<div class="t" style="left:1276px;top:706px;font-size:13px;color:#232629">配置：<span style="font-size:15px">Default</span></div>
<div class="a" style="left:0;top:724px;width:1366px;height:44px;background:#2a2e32"></div>
<div class="a" style="left:161px;top:724px;width:50px;height:44px;background:#484c51"></div>
<div class="a" style="left:161px;top:724px;width:50px;height:3px;background:#73777b"></div>
<div class="a" style="left:265px;top:724px;width:50px;height:44px;background:#484c51"></div>
<div class="a" style="left:265px;top:724px;width:50px;height:3px;background:#73777b"></div>
<div class="a" style="left:369px;top:724px;width:50px;height:44px;background:#484c51"></div>
<div class="a" style="left:369px;top:724px;width:50px;height:3px;background:#73777b"></div>
<div class="a" style="left:421px;top:724px;width:50px;height:44px;background:#484c51"></div>
<div class="a" style="left:421px;top:724px;width:50px;height:3px;background:#73777b"></div>
<div class="a" style="left:317px;top:724px;width:50px;height:44px;background:#2f6282"></div>
<div class="a" style="left:317px;top:724px;width:50px;height:3px;background:#3daee9"></div>
<svg style="left:20px;top:732px" width="28" height="26" viewBox="0 0 28 26">
<circle cx="8.1" cy="4" r="1.6" fill="#fcfcfc"/><circle cx="4.6" cy="13" r="2.3" fill="#fcfcfc"/><circle cx="11.3" cy="22.8" r="3" fill="#fcfcfc"/>
<path d="M16 3 L20 3 L26 10 L20 17 L16 17 L21.5 10 Z" fill="#fcfcfc"/></svg><svg style="left:68px;top:732px" width="28" height="28" viewBox="0 0 28 28">
<defs><linearGradient id="stg" x1="0" y1="0" x2="1" y2="1"><stop offset="0" stop-color="#3a3e42"/><stop offset="1" stop-color="#1b1e21"/></linearGradient></defs>
<rect x="0" y="0" width="28" height="27" fill="url(#stg)"/>
<path d="M3 10 H25 M3 18 H25" stroke="#4a4f54" stroke-width="1.6"/>
<path d="M3 10 H19.8 M3 18 H9.8" stroke="#3daee9" stroke-width="1.8"/>
<circle cx="19.8" cy="10" r="2.3" fill="#fcfcfc"/><circle cx="9.8" cy="18" r="2.3" fill="#fcfcfc"/></svg><svg style="left:122px;top:732px" width="25" height="28" viewBox="0 0 25 28">
<defs><linearGradient id="bag" x1="0" y1="0" x2="0" y2="1"><stop offset="0" stop-color="#2fb0f6"/><stop offset="1" stop-color="#1386e0"/></linearGradient></defs>
<path d="M7.5 6 V4.5 A5 5 0 0 1 17.5 4.5 V6" fill="none" stroke="#1f8fe0" stroke-width="1.4"/>
<path d="M0.5 5.5 H24.5 V27 H0.5 Z" fill="url(#bag)"/>
<circle cx="7" cy="8" r="0.8" fill="#0f6fb8"/><circle cx="18" cy="8" r="0.8" fill="#0f6fb8"/>
<path d="M14 11.5 L17 15 L14 18.5" fill="none" stroke="#cfeafc" stroke-width="1.4"/>
<circle cx="10.5" cy="13" r="0.7" fill="#cfeafc"/><circle cx="9.5" cy="16.5" r="0.8" fill="#cfeafc"/><circle cx="11.5" cy="22" r="1" fill="#cfeafc"/></svg><svg style="left:171px;top:732px" width="30" height="27" viewBox="0 0 30 27">
<defs><linearGradient id="fold" x1="0" y1="0" x2="1" y2="1"><stop offset="0" stop-color="#4fb8ec"/><stop offset="1" stop-color="#2a8fcf"/></linearGradient></defs>
<path d="M0.5 1 H11 L13 3 H29.5 V26.5 H0.5 Z" fill="#1a73b8"/>
<rect x="2" y="5" width="26" height="9" fill="#f4f6f8"/>
<path d="M0.5 9 H12 L14 7.5 H29.5 V26.5 H0.5 Z" fill="url(#fold)"/></svg><svg style="left:179.8px;top:756.3px" width="12" height="12" viewBox="0 0 12 12"><circle cx="6" cy="6" r="5.2" fill="#27ae60" stroke="#1f2326" stroke-width="0.8"/><path d="M6 3 V9 M3 6 H9" stroke="#fff" stroke-width="1.5"/></svg><svg style="left:216px;top:726px" width="44" height="40" viewBox="0 0 44 40">
<defs><radialGradient id="ffa" cx="0.72" cy="0.15" r="1"><stop offset="0" stop-color="#fff44f"/><stop offset="0.3" stop-color="#ffbd2e"/><stop offset="0.55" stop-color="#ff7139"/><stop offset="0.8" stop-color="#ff3647"/><stop offset="1" stop-color="#e31587"/></radialGradient>
<radialGradient id="ffb" cx="0.4" cy="0.75" r="0.8"><stop offset="0" stop-color="#6e5cf0"/><stop offset="0.6" stop-color="#8a4bf5"/><stop offset="1" stop-color="#b833e1"/></radialGradient></defs>
<path d="M26.5 3.9 C31 8 37.2 13 37.2 20 C37.2 28.5 30.5 34.8 22 34.8 C13.5 34.8 6.8 28.5 6.8 20 C6.8 15.5 9 11.5 12.4 9 L13.2 12.3 L17 10 L17.5 12.8 C19 12.2 20.5 11.8 21.8 11.8 C21.5 9 23.5 6 26.5 3.9 Z" fill="url(#ffa)"/>
<circle cx="22" cy="20.5" r="6.6" fill="url(#ffb)"/>
<path d="M11 17.5 C14 15.5 18 15.5 21.8 17 C20 18.5 17.5 19.5 16 20.5 C14 19.5 12.5 18.5 11 17.5 Z" fill="#ffa436"/>
<path d="M25.5 13.5 C28 14.5 29.5 17 28.8 20 C28 17.5 27 15.5 25.5 13.5 Z" fill="#ffd23a"/></svg><svg style="left:276px;top:732px" width="28" height="28" viewBox="0 0 28 28">
<defs><linearGradient id="trm" x1="0" y1="0" x2="1" y2="1"><stop offset="0" stop-color="#3c4044"/><stop offset="1" stop-color="#24272a"/></linearGradient></defs>
<rect x="0" y="0" width="28" height="27.5" fill="url(#trm)"/>
<path d="M10.7 7.6 L17.7 14.3 L10.7 21" fill="none" stroke="#e6e8ea" stroke-width="1.3"/></svg><svg style="left:283.5px;top:756.5px" width="12" height="12" viewBox="0 0 12 12"><circle cx="6" cy="6" r="5.2" fill="#27ae60" stroke="#1f2326" stroke-width="0.8"/><path d="M6 3 V9 M3 6 H9" stroke="#fff" stroke-width="1.5"/></svg><svg style="left:326px;top:730px" width="33" height="32" viewBox="0 0 33 32">
<defs><linearGradient id="wsf" x1="0.1" y1="0.1" x2="0.9" y2="0.9"><stop offset="0" stop-color="#3d8cf5"/><stop offset="0.55" stop-color="#0f56d6"/><stop offset="1" stop-color="#0633a0"/></linearGradient>
<linearGradient id="wsw" x1="0" y1="0" x2="0" y2="1"><stop offset="0" stop-color="#7aa8ef"/><stop offset="1" stop-color="#c8d8f4"/></linearGradient></defs>
<path d="M1 30.7 C2 18 10 3 31.5 1.4 C28.5 7 27.5 14 28.5 20 C29 24 28.8 27 29 30.7 Z" fill="url(#wsf)" stroke="#9ec1f2" stroke-width="0.5"/>
<path d="M1.2 27.5 C8 25 20 24.5 29 27 L29 30.7 H1 Z" fill="url(#wsw)" opacity="0.9"/></svg><svg style="left:335.5px;top:756.5px" width="12" height="12" viewBox="0 0 12 12"><circle cx="6" cy="6" r="5.2" fill="#27ae60" stroke="#1f2326" stroke-width="0.8"/><path d="M6 3 V9 M3 6 H9" stroke="#fff" stroke-width="1.5"/></svg><svg style="left:378px;top:730px" width="32" height="32" viewBox="0 0 32 32">
<defs><linearGradient id="nvb" x1="0" y1="0" x2="0" y2="1"><stop offset="0" stop-color="#2a9ae0"/><stop offset="1" stop-color="#1d6fc0"/></linearGradient>
<linearGradient id="nvg" x1="0" y1="0" x2="0" y2="1"><stop offset="0" stop-color="#7ac554"/><stop offset="1" stop-color="#4a9a36"/></linearGradient></defs>
<circle cx="15.8" cy="15.6" r="13.8" fill="none" stroke="#141414" stroke-width="2.4"/>
<circle cx="15.8" cy="15.6" r="15.2" fill="none" stroke="#141414" stroke-width="1.6" stroke-dasharray="1.4 1.1"/>
<circle cx="15.8" cy="2.6" r="1.6" fill="#484c51" stroke="#141414" stroke-width="1"/>
<path d="M3.2 9 L8 4.5 L10.3 26 L6.2 27.5 C3 22 2.5 14.5 3.2 9 Z" fill="url(#nvb)"/>
<path d="M4.6 5.4 L10.4 2.6 L26 25 L20.8 28 Z" fill="url(#nvg)"/>
<path d="M21 2.6 L27.6 6.8 C29.5 12 29.5 18.5 27 24 L23.6 27 Z" fill="url(#nvg)"/>
<rect x="6.5" y="26" width="2.6" height="2.2" fill="#1d6fc0" stroke="#141414" stroke-width="0.6"/><rect x="22.4" y="26" width="2.6" height="2.2" fill="#4a9a36" stroke="#141414" stroke-width="0.6"/></svg><svg style="left:431px;top:731px" width="30" height="30" viewBox="0 0 30 30">
<path d="M21.7 1.2 L29 4.5 V25.5 L21.7 29 Z" fill="#22a5f1"/>
<path d="M21.7 1.2 L21.7 8.9 L4.2 21.4 Q2.6 22.3 1.5 21 Q0.6 19.8 1.8 18.6 Z" fill="#0a7cd0"/>
<path d="M1.8 11.4 Q0.6 10.2 1.5 9 Q2.6 7.7 4.2 8.6 L21.7 20.6 L21.7 29 Z" fill="#0d8ce0"/></svg><svg style="left:1000px;top:728px" width="240" height="36" viewBox="0 0 240 36">
<g fill="none" stroke="#fcfcfc">
<rect x="10.4" y="11.5" width="13.4" height="14.2" stroke-width="1.3"/>
<path d="M13.6 17.8 H20.8 M13.6 20 H19.5 M13.6 22.4 H16.5" stroke-width="1.1"/>
<rect x="67.6" y="12.8" width="18.6" height="10.8" stroke-width="1.4"/>
<path d="M102.5 14.3 L111 21.5 L107 25.4 V9.9 L111 13.9 L102.5 21.2" stroke-width="1.1"/>
<path d="M156.8 16.8 A15 15 0 0 1 177.2 16.8 M160 20.2 A10.4 10.4 0 0 1 174 20.2 M163.2 23.3 A5.8 5.8 0 0 1 170.8 23.3" stroke-width="1.3"/>
<circle cx="167" cy="23.7" r="1.4" stroke-width="1.2"/>
<path d="M217.8 21.6 L225.2 14.2 L232.6 21.6" stroke-width="1.3"/>
</g>
<rect x="12.8" y="10.2" width="8.6" height="3.2" fill="#fcfcfc"/>
<rect x="86.6" y="15.6" width="1.8" height="5.2" fill="#fcfcfc"/>
<path d="M69.5 14.6 H80.5 L81.8 21.9 H69.5 Z" fill="#fcfcfc"/>
<g transform="translate(47 26.2) scale(1.22 1)"><text x="0" y="0" font-family="Liberation Sans" font-weight="bold" font-size="21" text-anchor="middle" fill="#e6e6e6" stroke="#000" stroke-width="1.6" paint-order="stroke">A</text></g>
<g stroke="#fcfcfc" stroke-width="1.2"><path d="M137 10.2 V12.6 M137 23.4 V25.8 M129.2 18 H131.6 M142.4 18 H144.8 M131.5 12.5 L133 14 M141 22 L142.5 23.5 M131.5 23.5 L133 22 M141 14 L142.5 12.5"/></g>
<circle cx="137" cy="18" r="3.9" fill="#2a2e32" stroke="#fcfcfc" stroke-width="1"/>
<path d="M137 14.1 A3.9 3.9 0 0 0 137 21.9 Z" fill="#fcfcfc"/>
<path d="M189.5 14.8 H193 L197.5 10.8 V25.2 L193 21.2 H189.5 Z" fill="#fcfcfc"/>
<path d="M199.6 14 A5.5 5.5 0 0 1 199.6 22 M202 11.5 A9 9 0 0 1 202 24.5" fill="none" stroke="#8d9094" stroke-width="1.1"/>
<path d="M189.6 10.2 L204.6 25.8" stroke="#da4453" stroke-width="1.2"/>
</svg><div class="t" style="left:1257.3px;top:730.6px;font-size:17.6px;color:#eff0f1">09:12</div><div class="t" style="left:1244.6px;top:748px;font-size:14px;color:#eff0f1">2024/12/13</div><svg style="left:1326px;top:738px" width="17" height="17" viewBox="0 0 17 17">
<rect x="1" y="0.8" width="14.4" height="14.6" fill="none" stroke="#fcfcfc" stroke-width="1.3"/><path d="M3 12.6 H13.4" stroke="#fcfcfc" stroke-width="1.1"/></svg>
</body></html>
